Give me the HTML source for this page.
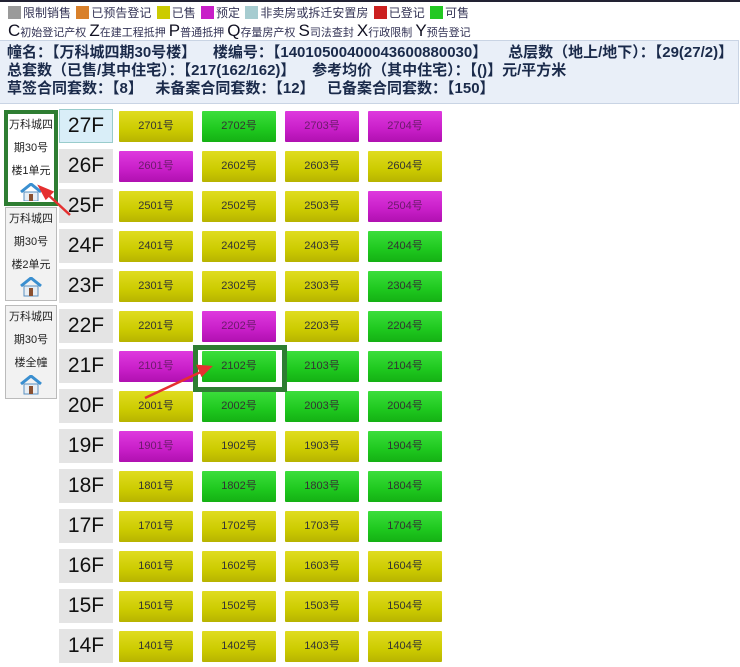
<!DOCTYPE html>
<html><head><meta charset="utf-8"><style>
body{margin:0;width:740px;height:667px;background:#fff;position:relative;overflow:hidden;font-family:"Liberation Sans","Noto Sans CJK SC",sans-serif;}
.a{position:absolute}
.leg{top:4px;left:6px;font-size:12px;color:#335;white-space:nowrap}
.leg i{display:inline-block;width:13px;height:13px;vertical-align:-2px;margin-right:2px;margin-left:2px}
.codes{top:22px;left:8px;font-size:11px;color:#335;white-space:nowrap;line-height:18px}
.codes b{font-size:17px;font-weight:normal;color:#112}
.hdr{top:40px;left:0;width:738px;height:62px;background:#e9eff8;border:1px solid #c9d4e4;border-left:none}
.hdr div{font-size:15px;font-weight:bold;color:#1a2a4a;white-space:nowrap;line-height:18px;padding-left:7px}
.fl{width:54px;height:34px;background:#e4e4e4;font-size:21px;color:#111;text-align:center;line-height:34px;left:59px}
.c{width:74px;height:31px;font-size:11px;color:#333;text-align:center;line-height:31px;border-radius:1px}
.Y{background:linear-gradient(#e0dc20,#cccb00 60%,#b7b300)}
.G{background:linear-gradient(#3cde3c,#1ec81e 60%,#14b014)}
.P{background:linear-gradient(#de3ade,#c81ec8 60%,#b010b0);color:#6a1a6a}
.btn{left:5px;width:50px;background:#f2f2f2;border:1px solid #bbb;font-size:11px;color:#222;text-align:center;line-height:23px}
.house{display:block;margin:0 auto}
</style></head><body>
<div class="a" style="top:0;left:0;width:740px;height:2px;background:#223"></div>
<div class="a leg"><i style="background:#9a9a9a"></i>限制销售 <i style="background:#d9802a"></i>已预告登记 <i style="background:#cccb00"></i>已售 <i style="background:#c81ec8"></i>预定 <i style="background:#a6ccd0"></i>非卖房或拆迁安置房 <i style="background:#cc2020"></i>已登记 <i style="background:#22c822"></i>可售</div>
<div class="a codes"><b>C</b>初始登记产权 <b>Z</b>在建工程抵押 <b>P</b>普通抵押 <b>Q</b>存量房产权 <b>S</b>司法查封 <b>X</b>行政限制 <b>Y</b>预告登记</div>
<div class="a hdr">
<div style="padding-top:3px">幢名：【万科城四期30号楼】&nbsp;&nbsp;&nbsp;&nbsp;楼编号：【14010500400043600880030】&nbsp;&nbsp;&nbsp;&nbsp;&nbsp;总层数（地上/地下）：【29(27/2)】</div>
<div>总套数（已售/其中住宅）：【217(162/162)】&nbsp;&nbsp;&nbsp;&nbsp;参考均价（其中住宅）：【()】元/平方米</div>
<div>草签合同套数：【8】&nbsp;&nbsp;&nbsp;未备案合同套数：【12】&nbsp;&nbsp;&nbsp;已备案合同套数：【150】</div>
</div>

<div class="a btn" style="top:110px;height:88px;border:4px solid #2e7d32;left:4px;width:46px;background:#fff">万科城四<br>期30号<br>楼1单元<svg class="house" width="24" height="18" viewBox="0 0 24 18"><path d="M2 9L12 1L22 9" fill="none" stroke="#3a8fd0" stroke-width="3"/><rect x="5" y="9" width="14" height="9" fill="#e8eef4" stroke="#5a90c0"/><rect x="10" y="11" width="4" height="7" fill="#8a5030"/></svg></div>
<div class="a btn" style="top:207px;height:92px">万科城四<br>期30号<br>楼2单元<svg class="house" width="24" height="20" viewBox="0 0 24 20"><path d="M2 9L12 1L22 9" fill="none" stroke="#3a8fd0" stroke-width="3"/><rect x="5" y="9" width="14" height="10" fill="#e8eef4" stroke="#5a90c0"/><rect x="10" y="11" width="4" height="8" fill="#8a5030"/></svg></div>
<div class="a btn" style="top:305px;height:92px">万科城四<br>期30号<br>楼全幢<svg class="house" width="24" height="20" viewBox="0 0 24 20"><path d="M2 9L12 1L22 9" fill="none" stroke="#3a8fd0" stroke-width="3"/><rect x="5" y="9" width="14" height="10" fill="#e8eef4" stroke="#5a90c0"/><rect x="10" y="11" width="4" height="8" fill="#8a5030"/></svg></div>

<div id="grid"></div>
<script>
var rows=["YGPP","PYYY","YYYP","YYYG","YYYG","YPYG","PGGG","YGGG","PYYG","YGGG","YYYG","YYYY","YYYY","YYYY"];
var xs=[119,202,285,368],h="";
for(var i=0;i<14;i++){var f=27-i,t=111+40*i;
h+='<div class="a fl" style="top:'+(t-2)+'px;'+(i==0?'background:#d9eef8;border:1px solid #9cc;width:52px;height:32px;line-height:32px':'')+'">'+f+'F</div>';
for(var j=0;j<4;j++)h+='<div class="a c '+rows[i][j]+'" style="top:'+t+'px;left:'+xs[j]+'px">'+f+'0'+(j+1)+'号</div>';}
document.getElementById('grid').innerHTML=h;
</script>
<div class="a" style="left:193px;top:345px;width:84px;height:37px;border:5px solid #2e7d32"></div>
<svg class="a" style="left:0;top:0" width="740" height="667"><g stroke="#e53030" stroke-width="2.5" fill="#e53030"><line x1="70" y1="215" x2="44" y2="191"/><polygon points="40,187 52,192 46,198"/><line x1="145" y1="398" x2="205" y2="370"/><polygon points="210,367 198,366 202,375"/></g></svg>
</body></html>
